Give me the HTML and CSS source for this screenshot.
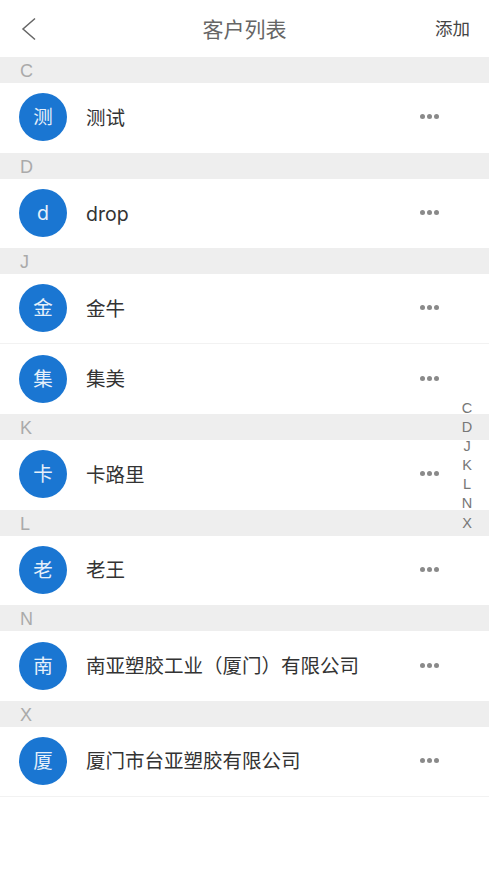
FILE: index.html
```html
<!DOCTYPE html>
<html lang="zh">
<head>
<meta charset="utf-8">
<title>客户列表</title>
<link rel="stylesheet" href="styles.css">
</head>
<body>
<header class="nav">
  <svg class="back" width="16" height="26" viewBox="0 0 16 26"><path d="M14 2.5 L2 13 L14 23.5" fill="none" stroke="#666" stroke-width="1.5"/></svg>
  <h1 class="title">客户列表</h1>
  <span class="add">添加</span>
</header>
<main class="list">
  <div class="head">C</div>
  <div class="row"><span class="avatar">测</span><span class="name">测试</span><span class="more"><i></i><i></i><i></i></span></div>
  <div class="head">D</div>
  <div class="row"><span class="avatar">d</span><span class="name">drop</span><span class="more"><i></i><i></i><i></i></span></div>
  <div class="head">J</div>
  <div class="row line"><span class="avatar">金</span><span class="name">金牛</span><span class="more"><i></i><i></i><i></i></span></div>
  <div class="row"><span class="avatar">集</span><span class="name">集美</span><span class="more"><i></i><i></i><i></i></span></div>
  <div class="head">K</div>
  <div class="row"><span class="avatar">卡</span><span class="name">卡路里</span><span class="more"><i></i><i></i><i></i></span></div>
  <div class="head">L</div>
  <div class="row"><span class="avatar">老</span><span class="name">老王</span><span class="more"><i></i><i></i><i></i></span></div>
  <div class="head">N</div>
  <div class="row"><span class="avatar">南</span><span class="name">南亚塑胶工业（厦门）有限公司</span><span class="more"><i></i><i></i><i></i></span></div>
  <div class="head">X</div>
  <div class="row line"><span class="avatar">厦</span><span class="name">厦门市台亚塑胶有限公司</span><span class="more"><i></i><i></i><i></i></span></div>
</main>
<nav class="index">
  <span>C</span><span>D</span><span>J</span><span>K</span><span>L</span><span>N</span><span>X</span>
</nav>
</body>
</html>
```
FILE: styles.css
```css
* { box-sizing: border-box; }
html, body { margin: 0; height: 100%; }
body {
  position: relative;
  background: #fff;
  font-family: Inter, "Noto Sans CJK SC", sans-serif;
  color: #333;
  overflow: hidden;
}
.nav {
  height: 57px;
  display: flex;
  align-items: center;
  justify-content: space-between;
  padding: 2px 19px 0 21px;
  position: relative;
}
.back { display: block; margin-top: -2px; }
.title {
  position: absolute;
  left: 0;
  right: 0;
  top: 1px;
  margin: 0;
  text-align: center;
  font-size: 21px;
  font-weight: 400;
  color: #666;
  line-height: 57px;
}
.add { font-size: 17.5px; line-height: 20px; color: #444; margin-top: -2px; }
.head {
  height: 26px;
  background: #eee;
  color: #aaa;
  font-family: "Liberation Sans", sans-serif;
  font-size: 18px;
  line-height: 28px;
  padding-left: 20px;
}
.row {
  height: 69.72px;
  display: flex;
  align-items: center;
  padding-left: 19px;
  padding-right: 50px;
  padding-bottom: 1px;
}
.line { border-bottom: 1px solid #f2f2f2; }
.avatar {
  width: 48px;
  height: 48px;
  flex: none;
  border-radius: 50%;
  background: #1a76d2;
  color: #e6f0fa;
  font-size: 19.5px;
  line-height: 24px;
  display: flex;
  align-items: center;
  justify-content: center;
}
.name {
  flex: 1;
  margin-left: 19px;
  font-size: 19.5px;
  line-height: 24px;
  padding-top: 1px;
  color: #333;
  white-space: nowrap;
}
.more { display: flex; gap: 2px; margin-top: -1px; }
.more i {
  width: 5px;
  height: 5px;
  border-radius: 50%;
  background: #8a8a8a;
}
.index {
  position: absolute;
  top: 399px;
  right: 16px;
  width: 12px;
  display: flex;
  flex-direction: column;
  align-items: center;
  color: #777;
  font-family: "Liberation Sans", sans-serif;
  font-size: 14.5px;
  line-height: 19.1px;
}
```
